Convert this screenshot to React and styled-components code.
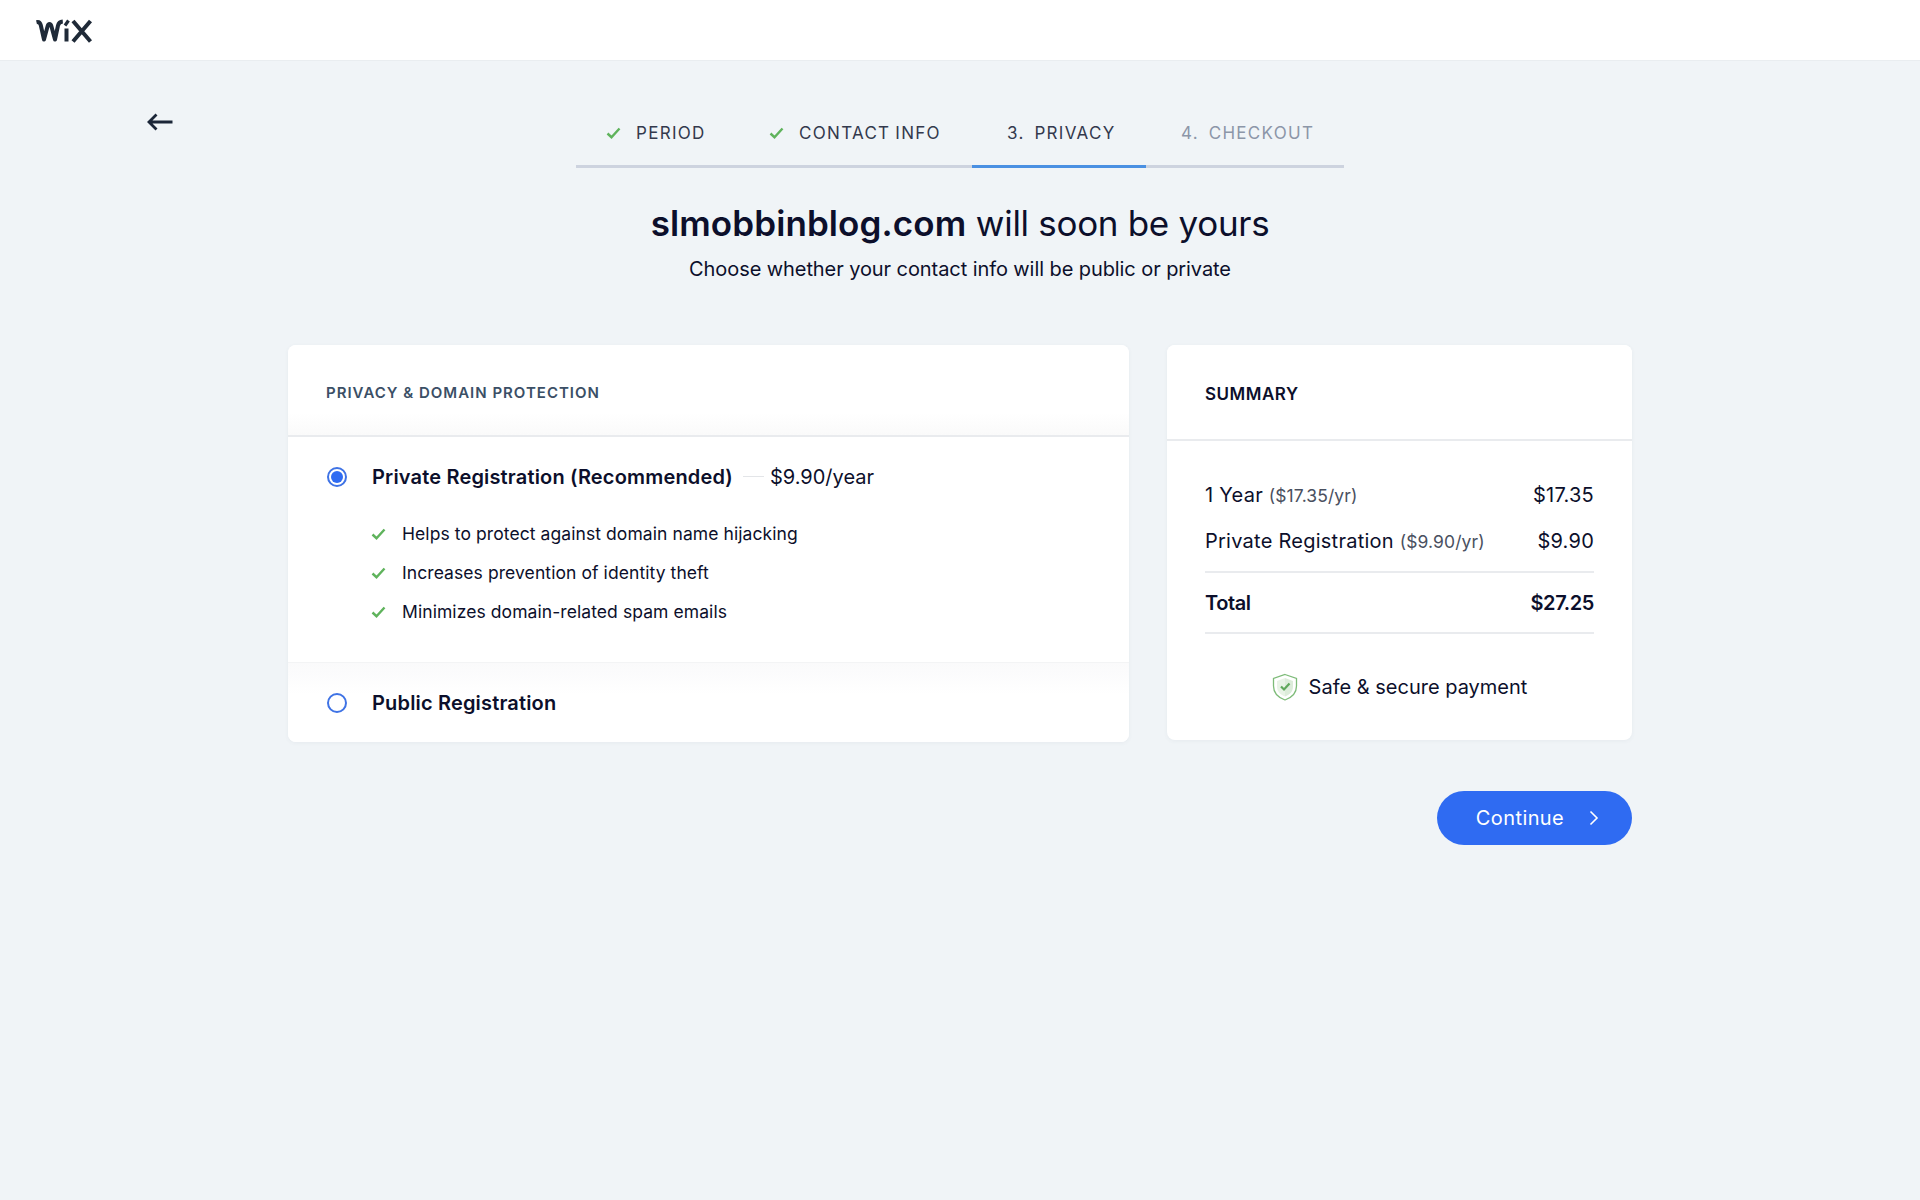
import React from "react";
import styled, { createGlobalStyle } from "styled-components";

const GlobalStyle = createGlobalStyle`
  html, body {
    margin: 0;
    padding: 0;
    background: #f0f4f7;
    font-family: "Inter", "Open Sans", sans-serif;
    color: #0c0f2b;
  }
  * {
    box-sizing: border-box;
  }
`;

const Page = styled.div`
  min-height: 1200px;
  background: #f0f4f7;
`;

const Header = styled.header`
  height: 61px;
  background: #fff;
  padding: 19px 0 0 35px;
  border-bottom: 1px solid #e9edf0;
`;

const TopRow = styled.div`
  display: grid;
  grid-template-columns: 1fr 768px 1fr;
`;

const BackButton = styled.div`
  padding: 51px 0 0 147px;
  line-height: 0;
`;

const Steps = styled.nav`
  display: flex;
  height: 107px;
  padding-top: 60px;
  align-items: flex-start;
`;

const Step = styled.div`
  display: flex;
  align-items: flex-start;
  height: 47px;
  width: ${(p) => p.$width}px;
  padding-left: ${(p) => p.$pad}px;
  gap: ${(p) => (p.$done ? 15 : 0)}px;
  font-size: 17px;
  line-height: 24px;
  letter-spacing: 1.3px;
  word-spacing: -1.2px;
  white-space: pre;
  color: ${(p) => (p.$muted ? "#8c96a8" : "#33394d")};
  border-bottom: 3px solid ${(p) => (p.$active ? "#4a90e2" : "#cdd3df")};
`;

const StepCheck = styled.svg`
  width: 15px;
  height: 24px;
`;

const Intro = styled.div`
  text-align: center;
  padding-top: 33px;
`;

const Title = styled.h1`
  margin: 0;
  font-size: 35px;
  line-height: 44px;
  font-weight: 400;
  letter-spacing: -0.3px;
  color: #0c0f2b;
`;

const Domain = styled.span`
  font-weight: 600;
  letter-spacing: 0.1px;
`;

const Subtitle = styled.p`
  margin: 0;
  padding-top: 12px;
  font-size: 20px;
  line-height: 24px;
  letter-spacing: -0.08px;
`;

const Columns = styled.div`
  display: flex;
  align-items: flex-start;
  gap: 38px;
  width: 1344px;
  margin: 64px auto 0;
`;

const Card = styled.section`
  background: #fff;
  border-radius: 8px;
  box-shadow: 0 1px 4px rgba(60, 80, 110, 0.06);
  width: ${(p) => p.$width}px;
  overflow: hidden;
`;

const CardHeader = styled.div`
  height: 92px;
  padding: 4px 38px 0;
  display: flex;
  align-items: center;
  background: linear-gradient(to bottom, #fff 75%, #fafafa);
  border-bottom: 2px solid #e9ebee;
  font-size: 15px;
  font-weight: 600;
  letter-spacing: 1px;
  color: #3b4f66;
`;

const SummaryHeader = styled(CardHeader)`
  height: 96px;
  padding-top: 3px;
  background: #fff;
  font-size: 17px;
  letter-spacing: 0.5px;
  color: #0c0f2b;
`;

const Option = styled.div`
  display: flex;
  align-items: center;
  gap: 25px;
  padding: 0 39px;
  height: ${(p) => p.$h}px;
  font-size: 20px;
  font-weight: 600;
  letter-spacing: 0.17px;
`;

const PublicOption = styled(Option)`
  background: linear-gradient(to bottom, #fafafb, #fff 40%);
  border-top: 1px solid #f3f4f5;
`;

const Radio = styled.span`
  width: 20px;
  height: 20px;
  flex: none;
  border-radius: 50%;
  border: 2px solid #3f73e5;
  display: flex;
  align-items: center;
  justify-content: center;
  &::after {
    content: "";
    width: 12px;
    height: 12px;
    border-radius: 50%;
    background: ${(p) => (p.$on ? "#2f6bf2" : "transparent")};
  }
`;

const Dash = styled.span`
  width: 21px;
  height: 1px;
  margin: 0 -19px 0 -15px;
  background: #e3e5e8;
`;

const Price = styled.span`
  font-weight: 400;
  letter-spacing: 0;
`;

const Benefits = styled.ul`
  list-style: none;
  margin: -2px 0 0;
  padding: 0 0 31px 83px;
`;

const Benefit = styled.li`
  display: flex;
  align-items: center;
  gap: 16px;
  height: 39px;
  font-size: 17.5px;
  letter-spacing: 0.08px;
`;

const SmallCheck = styled.svg`
  width: 15px;
  height: 12px;
  flex: none;
`;

const SummaryBody = styled.div`
  padding: 31px 38px 0;
`;

const Line = styled.div`
  display: flex;
  justify-content: space-between;
  align-items: center;
  height: 46px;
  font-size: 20px;
  letter-spacing: 0.25px;
`;

const Note = styled.span`
  font-size: 17.5px;
  letter-spacing: 0.1px;
  color: #4a5060;
`;

const TotalLine = styled(Line)`
  height: 63px;
  font-weight: 600;
  letter-spacing: -0.4px;
  border-top: 2px solid #e9ebee;
  border-bottom: 2px solid #e9ebee;
  margin-top: 7px;
`;

const Secure = styled.div`
  display: flex;
  align-items: center;
  justify-content: center;
  gap: 11px;
  height: 106px;
  font-size: 20px;
`;

const Actions = styled.div`
  width: 1344px;
  margin: 49px auto 0;
  display: flex;
  justify-content: flex-end;
`;

const ContinueButton = styled.button`
  width: 195px;
  height: 54px;
  padding: 0 0 0 6px;
  border: none;
  border-radius: 27px;
  background: #2f6bf2;
  color: #fff;
  font-family: inherit;
  font-size: 20px;
  letter-spacing: 0.4px;
  display: flex;
  align-items: center;
  justify-content: center;
  gap: 25px;
  cursor: pointer;
`;

const Check = () => (
  <SmallCheck viewBox="0 0 15 12" fill="none">
    <path d="M1.5 6.5 5.5 10.2 13.5 1.5" stroke="#5fb35c" strokeWidth="2.4" />
  </SmallCheck>
);

const StepTick = () => (
  <StepCheck viewBox="0 0 15 24" fill="none">
    <path d="M1.5 12.5 5.5 16.2 13.5 7.5" stroke="#5fb35c" strokeWidth="2.4" />
  </StepCheck>
);

const benefits = [
  "Helps to protect against domain name hijacking",
  "Increases prevention of identity theft",
  "Minimizes domain-related spam emails",
];

const App = () => (
  <Page>
    <GlobalStyle />
    <Header>
      <svg width="58" height="24" viewBox="0 0 58 24" fill="none" style={{ display: "block" }}>
        <path d="M1.5 3.2C4 2.6 5.2 3.8 5.8 6.2L9 20.5 12.6 7.2C13.4 4.2 15.6 4.2 16.4 7.2L20 20.5 23 6.5C23.6 4 25 2.8 27.8 2.6" stroke="#1f2a38" strokeWidth="4" strokeLinejoin="round" />
        <path d="M31.5 9.5V22.5" stroke="#1f2a38" strokeWidth="4" />
        <path d="M30 6.5 33.5 1.5" stroke="#1f2a38" strokeWidth="3.2" />
        <path d="M38 2 55.5 22.5M55.5 2 38 22.5" stroke="#1f2a38" strokeWidth="4" />
      </svg>
    </Header>
    <TopRow>
      <BackButton>
        <svg width="26" height="20" viewBox="0 0 26 20" fill="none">
          <path d="M9.5 2.5 2 10 9.5 17.5M2 10H25.5" stroke="#1b2638" strokeWidth="2.8" />
        </svg>
      </BackButton>
      <div>
        <Steps>
          <Step $width={163} $pad={30} $done>
            <StepTick />
            PERIOD
          </Step>
          <Step $width={233} $pad={30} $done>
            <StepTick />
            CONTACT INFO
          </Step>
          <Step $width={174} $pad={35} $active>
            {"3.  PRIVACY"}
          </Step>
          <Step $width={198} $pad={35} $muted>
            {"4.  CHECKOUT"}
          </Step>
        </Steps>
      </div>
      <div />
    </TopRow>
    <Intro>
      <Title>
        <Domain>slmobbinblog.com</Domain> will soon be yours
      </Title>
      <Subtitle>Choose whether your contact info will be public or private</Subtitle>
    </Intro>
    <Columns>
      <Card $width={841}>
        <CardHeader>PRIVACY &amp; DOMAIN PROTECTION</CardHeader>
        <Option $h={79}>
          <Radio $on />
          Private Registration (Recommended)
          <Dash />
          <Price>$9.90/year</Price>
        </Option>
        <Benefits>
          {benefits.map((b) => (
            <Benefit key={b}>
              <Check />
              {b}
            </Benefit>
          ))}
        </Benefits>
        <PublicOption $h={80}>
          <Radio />
          Public Registration
        </PublicOption>
      </Card>
      <Card $width={465}>
        <SummaryHeader>SUMMARY</SummaryHeader>
        <SummaryBody>
          <Line>
            <span>
              1 Year <Note>($17.35/yr)</Note>
            </span>
            <span>$17.35</span>
          </Line>
          <Line>
            <span>
              Private Registration <Note>($9.90/yr)</Note>
            </span>
            <span>$9.90</span>
          </Line>
          <TotalLine>
            <span>Total</span>
            <span>$27.25</span>
          </TotalLine>
          <Secure>
            <svg width="26" height="28" viewBox="0 0 26 28" fill="none">
              <path d="M13 1.5 24.5 5.5V13C24.5 20 20 24.5 13 27 6 24.5 1.5 20 1.5 13V5.5Z" stroke="#7dbb78" strokeWidth="1.3" fill="#fff" />
              <path d="M13 5 21 8V13.5C21 18.5 18 21.5 13 23.5Z" fill="#dcecda" />
              <path d="M13 5 5 8V13.5C5 18.5 8 21.5 13 23.5Z" fill="#e8f3e6" />
              <path d="M9 13.5 12 16.5 17.5 10.5" stroke="#5fa85c" strokeWidth="2.2" />
            </svg>
            Safe &amp; secure payment
          </Secure>
        </SummaryBody>
      </Card>
    </Columns>
    <Actions>
      <ContinueButton>
        Continue
        <svg width="10" height="16" viewBox="0 0 10 16" fill="none">
          <path d="M1.5 1.5 8 8 1.5 14.5" stroke="#fff" strokeWidth="1.6" />
        </svg>
      </ContinueButton>
    </Actions>
  </Page>
);

export default App;
